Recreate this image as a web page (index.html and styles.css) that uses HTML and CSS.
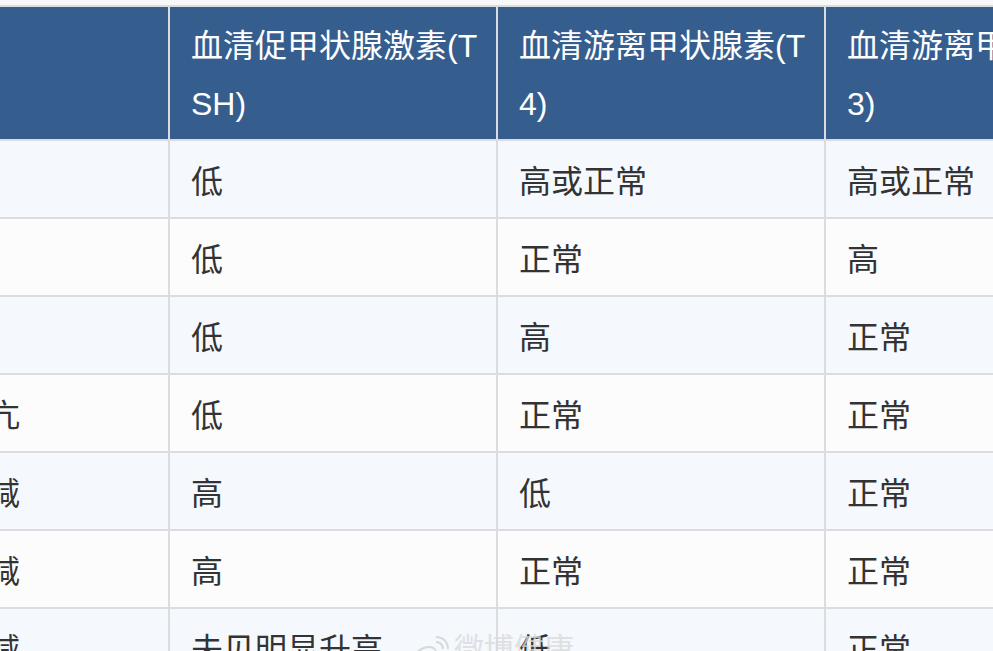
FILE: index.html
```html
<!DOCTYPE html>
<html lang="zh">
<head>
<meta charset="utf-8">
<title>甲状腺功能</title>
<link rel="stylesheet" href="styles.css">
</head>
<body>
<div class="page">
  <table class="thyroid">
    <thead>
      <tr>
        <th class="c1">类型</th>
        <th class="c2">血清促甲状腺激素(TSH)</th>
        <th class="c3">血清游离甲状腺素(T4)</th>
        <th class="c4">血清游离甲状腺素(T3)</th>
      </tr>
    </thead>
    <tbody>
      <tr class="odd"><td>甲亢</td><td>低</td><td>高或正常</td><td>高或正常</td></tr>
      <tr class="even"><td>T3型甲亢</td><td>低</td><td>正常</td><td>高</td></tr>
      <tr class="odd"><td>T4型甲亢</td><td>低</td><td>高</td><td>正常</td></tr>
      <tr class="even"><td>亚临床甲亢</td><td>低</td><td>正常</td><td>正常</td></tr>
      <tr class="odd"><td>原发性甲减</td><td>高</td><td>低</td><td>正常</td></tr>
      <tr class="even"><td>亚临床甲减</td><td>高</td><td>正常</td><td>正常</td></tr>
      <tr class="odd"><td>中枢性甲减</td><td>未见明显升高</td><td>低</td><td>正常</td></tr>
    </tbody>
  </table>
  <div class="watermark">
    <svg class="wm-logo" width="40" height="30" viewBox="0 0 40 30" fill="none" stroke="#d0d0d0" stroke-width="2">
      <path d="M4 24c0-7 8-13 15-13 6 0 8 4 6 8-2 5-9 8-15 8-4 0-6-1-6-3z"/>
      <path d="M26 6c4 0 7 3 7 7"/>
      <path d="M26 1c7 0 12 5 12 12"/>
    </svg>
    <span class="wm-text">微博健康</span>
  </div>
</div>
</body>
</html>
```

FILE: styles.css
```css
html, body {
  margin: 0;
  padding: 0;
}
body {
  background: #f9f8f8;
  overflow: hidden;
  width: 993px;
  height: 651px;
}
.page {
  position: relative;
  padding-top: 5px;
  margin-left: -163px;
}
.thyroid {
  border-collapse: separate;
  border-spacing: 0;
  table-layout: fixed;
  width: 1317px;
  border-top: 2px solid #dadcdf;
  border-left: 2px solid #dadcdf;
  font-family: "Liberation Sans", "Noto Sans CJK SC", sans-serif;
  font-size: 32px;
  line-height: 58px;
  color: #333333;
  word-break: break-all;
}
.thyroid th,
.thyroid td {
  box-sizing: border-box;
  text-align: left;
  vertical-align: top;
  border-right: 2px solid #dadcdf;
  border-bottom: 2px solid #dadcdf;
  padding: 12px 12px 6px 21px;
}
.thyroid th {
  background: #355e8f;
  color: #ffffff;
  font-weight: normal;
  padding-top: 10px;
  padding-bottom: 6px;
}
.c1 { width: 331px; }
.c2, .c3, .c4 { width: 328px; }
.odd td { background: #f5f9fe; }
.even td { background: #fcfcfd; }
.watermark {
  position: absolute;
  left: 573px;
  top: 620px;
  display: flex;
  align-items: flex-end;
  gap: 4px;
  opacity: 0.8;
}
.wm-text {
  font-family: "Noto Sans CJK SC", sans-serif;
  font-size: 30px;
  line-height: 40px;
  color: #dadada;
  margin-top: 6px;
}
```
